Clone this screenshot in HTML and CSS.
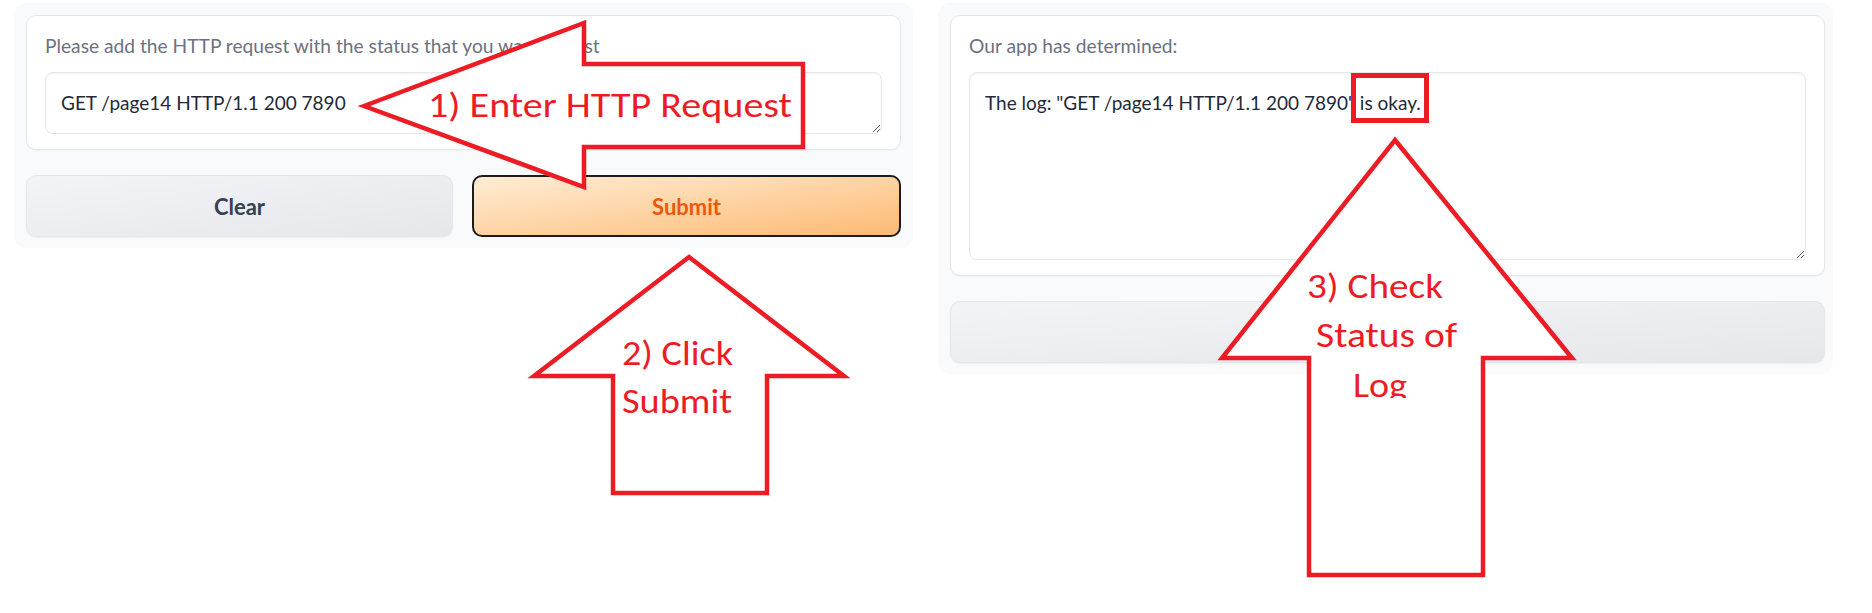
FILE: index.html
```
<!DOCTYPE html>
<html lang="en">
<head>
<meta charset="utf-8">
<title>HTTP log status</title>
<link rel="stylesheet" href="styles.css">
</head>
<body>
<div class="page">
  <div class="col">
    <div class="card">
      <label class="lbl">Please add the HTTP request with the status that you want to test</label>
      <textarea class="ta ta-in" readonly>GET /page14 HTTP/1.1 200 7890</textarea>
    </div>
    <div class="btns">
      <button class="btn btn-sec">Clear</button>
      <button class="btn btn-pri">Submit</button>
    </div>
  </div>
  <div class="col col-right">
    <div class="card">
      <label class="lbl">Our app has determined:</label>
      <textarea class="ta ta-out" readonly>The log: "GET /page14 HTTP/1.1 200 7890" is okay.</textarea>
    </div>
    <button class="btn btn-sec btn-full"></button>
  </div>
</div>
<svg class="overlay" width="1872" height="613" viewBox="0 0 1872 613" xmlns="http://www.w3.org/2000/svg">
  <defs>
    <clipPath id="clip3"><rect x="1200" y="250" width="300" height="148"/></clipPath>
  </defs>
  <polygon class="arrow" points="364,106 584,23 584,64 803,64 803,147 584,147 584,187"/>
  <text class="note" x="428" y="117" textLength="364" lengthAdjust="spacingAndGlyphs">1) Enter HTTP Request</text>

  <polygon class="arrow" points="689,257 844,376 767,376 767,493 613,493 613,376 534,376"/>
  <text class="note" x="622" y="365" textLength="111" lengthAdjust="spacingAndGlyphs">2) Click</text>
  <text class="note" x="622" y="413" textLength="110" lengthAdjust="spacingAndGlyphs">Submit</text>

  <polygon class="arrow" points="1395,140 1572,358 1483,358 1483,575 1309,575 1309,358 1222,358"/>
  <g clip-path="url(#clip3)">
    <text class="note" x="1307" y="298" textLength="136" lengthAdjust="spacingAndGlyphs">3) Check</text>
    <text class="note" x="1316" y="347" textLength="141" lengthAdjust="spacingAndGlyphs">Status of</text>
    <text class="note" x="1353" y="397" textLength="54" lengthAdjust="spacingAndGlyphs">Log</text>
  </g>

  <rect class="box" x="1353.5" y="75.5" width="73" height="45"/>
</svg>
</body>
</html>
```
FILE: styles.css
```
html, body {
  margin: 0;
  padding: 0;
  background: #ffffff;
}
body {
  position: relative;
  width: 1872px;
  height: 613px;
  overflow: hidden;
  font-family: Lato, "Noto Sans", sans-serif;
}
.page {
  display: flex;
  align-items: flex-start;
  gap: 25px;
  padding: 3px 0 0 14px;
}
.col {
  width: 899px;
  box-sizing: border-box;
  background: #f9fafb;
  border-radius: 12px;
  padding: 12px 12px 11px;
  display: flex;
  flex-direction: column;
  gap: 25px;
}
.col-right {
  width: 895px;
  padding-right: 8px;
}
.card {
  background: #ffffff;
  border: 1px solid #e5e7eb;
  border-radius: 10px;
  padding: 18px 18px 15px;
  box-shadow: 0 1px 2px rgba(0, 0, 0, 0.04);
}
.lbl {
  display: block;
  font-size: 19.2px;
  line-height: 24px;
  color: #6b7280;
  margin-bottom: 14px;
}
.ta {
  display: block;
  width: 100%;
  box-sizing: border-box;
  margin: 0;
  border: 1px solid #e5e7eb;
  border-radius: 8px;
  padding: 17px 15px;
  font-family: Lato, "Noto Sans", sans-serif;
  font-size: 19px;
  line-height: 26px;
  color: #1f2937;
  background: #ffffff;
  box-shadow: inset 0 1px 2px rgba(0, 0, 0, 0.05);
  resize: vertical;
  outline: none;
}
.ta-in { height: 62px; }
.ta-out { height: 188px; }
.btns {
  display: flex;
  gap: 19px;
}
.btn {
  flex: 1;
  height: 62px;
  box-sizing: border-box;
  border-radius: 10px;
  font-family: Lato, "Noto Sans", sans-serif;
  font-weight: 700;
  font-size: 22px;
  cursor: pointer;
}
.btn-sec {
  border: 1px solid #e5e7eb;
  background: linear-gradient(to bottom right, #f3f4f6, #e5e7eb);
  color: #374151;
  box-shadow: 0 1px 2px rgba(0, 0, 0, 0.05);
}
.btn-pri {
  border: 2px solid #1c1c1c;
  background: linear-gradient(to bottom right, #ffedd5, #fdba74);
  color: #ea580c;
}
.btn-full {
  flex: none;
  width: 100%;
}
.overlay {
  position: absolute;
  left: 0;
  top: 0;
  pointer-events: none;
}
.arrow {
  fill: #ffffff;
  stroke: #ed1c24;
  stroke-width: 4.5;
  stroke-linejoin: miter;
}
.box {
  fill: none;
  stroke: #ed1c24;
  stroke-width: 5;
}
.note {
  fill: #ed1c24;
  font-family: Carlito, Lato, sans-serif;
  font-size: 34px;
}
```
